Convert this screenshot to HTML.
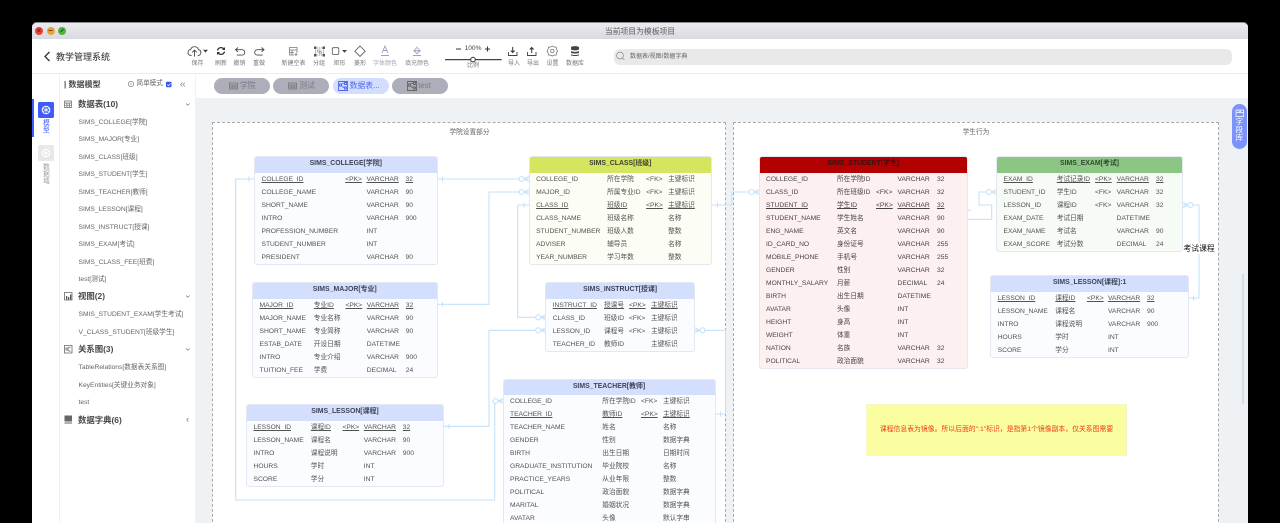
<!DOCTYPE html>
<html lang="zh">
<head>
<meta charset="utf-8">
<title>教学管理系统</title>
<style>
*{box-sizing:border-box;margin:0;padding:0}
html,body{width:1280px;height:523px;overflow:hidden;background:#000}
body{font-family:"Liberation Sans","Noto Sans CJK SC",sans-serif;position:relative}
.win{position:absolute;left:32px;top:22px;width:1216px;height:501px;background:#fff;border-radius:5px 5px 0 0;overflow:hidden}
.page{position:absolute;left:0;top:0;width:1280px;height:523px;filter:blur(.3px)}
.bar{position:absolute;left:32px;top:22px;width:1216px;height:17px;background:linear-gradient(#ebecf0,#d9dadf);border-radius:5px 5px 0 0;border-top:1px solid #8d8d90}
.dot{position:absolute;width:8px;height:8px;border-radius:50%;top:26.5px}
.tt{position:absolute;white-space:nowrap}
.lb{position:absolute;top:61px;font-size:6px;line-height:7px;color:#777;white-space:nowrap;transform:translateX(-50%)}
.tab{position:absolute;top:78px;height:16px;width:56px;border-radius:8px;background:#aeaeba;color:#7b7b85;font-size:7.8px;line-height:16px}
.tab span{position:absolute;left:26px;top:0;white-space:nowrap}
.tab svg{position:absolute;left:15px;top:4px}
.it{position:absolute;left:78.5px;font-size:6.7px;line-height:10px;margin-top:1px;color:#666;white-space:nowrap}
.gr{position:absolute;left:78px;font-size:8.4px;font-weight:700;line-height:12px;color:#484848;white-space:nowrap}
.dash{position:absolute;top:122px;height:420px;background:#fff;border:1px dashed #a9a9a9}
.cap{position:absolute;top:128px;font-size:6.7px;line-height:9px;color:#666;white-space:nowrap;transform:translateX(-50%)}
.e{position:absolute;background:#fbfcff;border:1px solid #e3e8f1;border-radius:3px;font-size:6.7px;color:#525252;overflow:hidden}
.e h3{height:16.5px;margin:-1px -1px 0;background:#d3dffc;font-size:6.9px;line-height:16px;text-align:center;font-weight:700;color:#3f4358}
.r{display:grid;grid-template-columns:var(--g);height:13px;line-height:13px;white-space:nowrap;padding-left:6.5px}
.r i{font-style:normal;display:block}
.u i{text-decoration:underline}
svg.o{position:absolute;left:0;top:0}
</style>
</head>
<body>
<div class="win"></div>
<div class="page">
<div class="bar"></div>
<div class="dot" style="left:35px;background:#e0443e"></div>
<div class="dot" style="left:46.5px;background:#e5a23c"></div>
<div class="dot" style="left:58px;background:#4fb340"></div>
<svg class="o" width="1280" height="523" fill="none"><path d="M37.5 29l3 3M40.5 29l-3 3" stroke="#7d1a16" stroke-width=".8"/><path d="M48.5 30.5h4" stroke="#7a4a08" stroke-width="1"/><path d="M60.5 32l3-3" stroke="#145c12" stroke-width="1"/></svg>
<div class="tt" style="left:640px;top:26.5px;transform:translateX(-50%);font-size:7.8px;line-height:10px;color:#5c5c5c">当前项目为模板项目</div>

<!-- toolbar -->
<div style="position:absolute;left:32px;top:73px;width:1216px;height:1px;background:#ececee"></div>
<div style="position:absolute;left:196px;top:98px;width:1052px;height:425px;background:#eef2f4"></div>
<div class="tt" style="left:56px;top:51px;font-size:9px;line-height:12px;color:#4a4a4a;font-weight:500">教学管理系统</div>
<svg class="o" width="1280" height="523" fill="none">
<path d="M49.5 52l-4.5 4.5 4.5 4.500" stroke="#333" stroke-width="1.3"/>
<path d="M191.5 55.5c-2.2 0-3.5-1.3-3.5-3 0-1.6 1.2-2.8 2.6-2.9.6-1.8 2.1-2.9 3.9-2.9 2 0 3.500 1.200 4 3 1.300.2 2.400 1.300 2.400 2.800 0 1.700-1.300 3-3.100 3" stroke="#444" stroke-width=".9"/>
<path d="M194.5 56.5v-6M192.3 52.3l2.200-2.200 2.200 2.200" stroke="#444" stroke-width=".9"/>
<path d="M203 49.8h5l-2.500 2.800z" fill="#444"/>
<path d="M217.5 50.5c.4-1.900 1.900-2.900 3.500-2.900 1.200 0 2.200.5 2.900 1.400M224.5 51.5c-.4 1.900-1.900 2.900-3.500 2.900-1.200 0-2.200-.5-2.900-1.400" stroke="#333" stroke-width="1.3"/>
<path d="M225 47v3h-3zM217 55v-3h3z" fill="#333"/>
<path d="M238 47.5l-2.500 2.200 2.500 2.200M235.8 49.7h6c1.900 0 3 1.200 3 2.700s-1.100 2.700-3 2.700h-5" stroke="#444" stroke-width=".9"/>
<path d="M261.5 47.5l2.500 2.200-2.500 2.200M263.7 49.7h-6c-1.900 0-3 1.200-3 2.700s1.100 2.700 3 2.700h5" stroke="#444" stroke-width=".9"/>
<path d="M297 53v-5.500h-7.500v7.500h4.500M289.500 50h7.500M289.500 52.500h4.500M292 50v5" stroke="#777" stroke-width=".8"/>
<path d="M296 53v3M294.500 54.500h3" stroke="#777" stroke-width=".8"/>
<path d="M315.500 48h8M315.500 55h8M315.500 48v7M323.500 48v7" stroke="#666" stroke-width=".8" stroke-dasharray="1 .8"/>
<path d="M314 46.500h2.500v2.500h-2.500zM322.500 46.500h2.500v2.500h-2.500zM314 54h2.500v2.500h-2.500zM322.500 54h2.500v2.500h-2.500z" fill="#555"/>
<path d="M317.500 50h2.500v2h-2.500zM319.500 51.500h2v2h-2z" stroke="#777" stroke-width=".6"/>
<rect x="332.3" y="47.7" width="6.5" height="6.8" rx="1.2" stroke="#555" stroke-width=".8"/>
<path d="M342 50h5l-2.500 2.800z" fill="#444"/>
<path d="M360 46l5.200 5.200-5.200 5.200-5.200-5.200z" stroke="#555" stroke-width=".8"/>
<path d="M382 53l3-7 3 7M383.200 50.500h3.600" stroke="#9aa3bb" stroke-width=".9"/><path d="M381 55.500h8" stroke="#9aa3bb" stroke-width="1"/>
<path d="M417 46.500v1.500M417 47.500l3.300 3.200-3.300 3-3.300-3z" stroke="#9aa3bb" stroke-width=".8"/><path d="M414.200 50.800h6" stroke="#9aa3bb" stroke-width="1.2"/><path d="M413 55.500h8" stroke="#9aa3bb" stroke-width="1"/>
<path d="M456 49h5M485 49h5M487.500 46.500v5" stroke="#333" stroke-width="1.1"/>
<path d="M445 59.600h56.700" stroke="#444" stroke-width="1.2"/>
<circle cx="473" cy="59.6" r="2.3" fill="#fff" stroke="#333" stroke-width="1"/>
<path d="M508.500 52v3.500h8.500V52" stroke="#444" stroke-width=".9"/><path d="M512.700 47v5.500M510.800 50.500l1.900 2 1.900-2" stroke="#333" stroke-width="1"/>
<path d="M527.500 52v3.500h8.500V52" stroke="#444" stroke-width=".9"/><path d="M531.700 53v-5.500M529.800 49.500l1.900-2 1.900 2" stroke="#333" stroke-width="1"/>
<circle cx="552.3" cy="51" r="1.7" stroke="#666" stroke-width=".7"/>
<path d="M550.500 47l1.800-1 1.800 1 2 .1.400 2 1 2-1 1.900-.4 2-2 .1-1.800 1-1.800-1-2-.1-.4-2-1-1.900 1-2 .4-2z" stroke="#666" stroke-width=".7"/>
<path d="M571 47.500c0-1.800 8-1.800 8 0v1.500c0 1.800-8 1.800-8 0zM571 50.500c0 1.800 8 1.800 8 0v1.700c0 1.800-8 1.800-8 0zM571 53.700c0 1.800 8 1.800 8 0v1c0 1.800-8 1.800-8 0z" fill="#444"/>
</svg>
<div class="lb" style="left:197.5px">保存</div>
<div class="lb" style="left:221px">刷新</div>
<div class="lb" style="left:239.5px">撤销</div>
<div class="lb" style="left:259px">重做</div>
<div class="lb" style="left:293.5px">新建空表</div>
<div class="lb" style="left:319px">分组</div>
<div class="lb" style="left:339.5px">矩形</div>
<div class="lb" style="left:360px">菱形</div>
<div class="lb" style="left:385px;color:#a3a7b5">字体颜色</div>
<div class="lb" style="left:417px;color:#888">填充颜色</div>
<div class="tt" style="left:473px;top:45px;transform:translateX(-50%);font-size:6.6px;line-height:8px;color:#444">100%</div>
<div class="lb" style="left:473px;top:63px">比例</div>
<div class="lb" style="left:514px">导入</div>
<div class="lb" style="left:533px">导出</div>
<div class="lb" style="left:552.5px">设置</div>
<div class="lb" style="left:575px">数据库</div>
<div style="position:absolute;left:614px;top:48.5px;width:618px;height:16.5px;border-radius:6px;background:#e9e9e9"></div>
<svg class="o" width="1280" height="523" fill="none"><circle cx="620" cy="55.5" r="3.4" stroke="#888" stroke-width=".7"/><path d="M622.500 58l1.800 1.800" stroke="#888" stroke-width=".7"/></svg>
<div class="tt" style="left:630px;top:52.5px;font-size:6px;line-height:8px;color:#666">数据表/视图/数据字典</div>

<!-- tabs -->
<div class="tab" style="left:214px"><svg width="9" height="8" fill="none" stroke="#777" stroke-width=".8"><path d="M.5 1h8v6h-8zM.5 3h8M.5 5h8M3.200 3v4M5.900 3v4"/></svg><span>学院</span></div>
<div class="tab" style="left:273.3px"><svg width="9" height="8" fill="none" stroke="#777" stroke-width=".8"><path d="M.5 1h8v6h-8zM.5 3h8M.5 5h8M3.200 3v4M5.900 3v4"/></svg><span>测试</span></div>
<div class="tab" style="left:332.7px;background:#d3deff;color:#4f68ea"><svg style="left:5px;top:3px" width="10" height="10" fill="none" stroke="#4f68ea" stroke-width=".9"><path d="M.5.500h9v9h-9zM3.500 3l3-1M3.500 5l3 2M1.500 3h2v2h-2zM6.500 1.500h2v2h-2zM6.500 6h2v2h-2z"/></svg><span style="left:17px">数据表...</span></div>
<div class="tab" style="left:391.7px"><svg style="left:15px;top:3px" width="10" height="10" fill="none" stroke="#666" stroke-width=".9"><path d="M.5.500h9v9h-9zM3.500 3l3-1M3.500 5l3 2M1.500 3h2v2h-2zM6.500 1.500h2v2h-2zM6.500 6h2v2h-2z"/></svg><span style="left:26.5px;font-size:7.8px">test</span></div>

<!-- sidebar -->
<div style="position:absolute;left:59px;top:74px;width:1px;height:449px;background:#eff0f2"></div>
<div style="position:absolute;left:195px;top:74px;width:1px;height:449px;background:#f1f2f4"></div>
<div style="position:absolute;left:32px;top:99px;width:1.5px;height:38px;background:#3f5cf8"></div>
<div style="position:absolute;left:38px;top:102px;width:16px;height:16px;background:#3f5cf8;border-radius:1.5px"></div>
<div style="position:absolute;left:38px;top:145px;width:16px;height:16px;background:#e8e8e8;border-radius:1.5px"></div>
<svg class="o" width="1280" height="523" fill="none"><circle cx="46" cy="110" r="3.8" stroke="#fff" stroke-width="1"/><path d="M46 106.500v7M42.800 108.200l6.400 3.600M49.200 108.200l-6.400 3.600" stroke="#fff" stroke-width=".7"/><circle cx="46" cy="153" r="3.8" stroke="#fff" stroke-width="1"/><path d="M46 149.500v7M42.800 151.200l6.400 3.600M49.200 151.200l-6.400 3.600" stroke="#fff" stroke-width=".7"/></svg>
<div class="tt" style="left:43px;top:120px;width:7px;font-size:6.8px;line-height:7px;color:#3f5cf8;white-space:normal">模<br>型</div>
<div class="tt" style="left:43px;top:163.5px;width:7px;font-size:6.8px;line-height:7px;color:#9a9a9a;white-space:normal">数<br>据<br>域</div>

<div class="tt" style="left:64px;top:79px;font-size:8px;line-height:12px;font-weight:700;color:#4a4a4a">| 数据模型</div>
<svg class="o" width="1280" height="523" fill="none"><circle cx="131" cy="84" r="2.7" stroke="#666" stroke-width=".6"/><path d="M131 82.800v1.800M131 85.100v.5" stroke="#666" stroke-width=".6"/><rect x="166" y="81.8" width="5.5" height="5.5" rx="1" fill="#3554e8"/><path d="M167.200 84.500l1.300 1.300 2-2.300" stroke="#fff" stroke-width=".7"/><path d="M182.500 82.500l-2 2 2 2M185 82.500l-2 2 2 2" stroke="#888" stroke-width=".7"/>
<path d="M186 103.500l1.800 1.800 1.800-1.800M186 295.500l1.800 1.800 1.800-1.800M186 348.500l1.800 1.800 1.800-1.800" stroke="#777" stroke-width=".7"/><path d="M188.500 418l-1.800 1.800 1.800 1.800" stroke="#777" stroke-width=".7"/>
<path d="M64.500 101h7v6.500h-7zM64.500 103h7M64.500 105.200h7M67 103v4.500M69.400 103v4.500" stroke="#666" stroke-width=".7"/>
<path d="M64.500 292.500h7.500v7.500h-7.500z" stroke="#666" stroke-width=".8"/><path d="M66 296h1.300v3.500H66zM68 297h1.300v2.500H68zM70 294.500h1.300v5H70z" fill="#555"/>
<path d="M64.500 345.500h7.500v7.500h-7.500zM68 348l2.500-1M68 350.500l2.500 1M66 348h2v2h-2z" stroke="#666" stroke-width=".8"/>
<path d="M64.500 415.500h7.500v6h-7.500z" fill="#666"/><path d="M64.500 423h7.500" stroke="#666" stroke-width="1"/></svg>
<div class="tt" style="left:136.5px;top:80px;font-size:6.6px;line-height:8px;color:#666">简单模式</div>
<div class="gr" style="top:98.3px">数据表(10)</div>
<div class="it" style="top:116.7px">SIMS_COLLEGE[学院]</div>
<div class="it" style="top:134.2px">SIMS_MAJOR[专业]</div>
<div class="it" style="top:151.7px">SIMS_CLASS[班级]</div>
<div class="it" style="top:169.2px">SIMS_STUDENT[学生]</div>
<div class="it" style="top:186.7px">SIMS_TEACHER[教师]</div>
<div class="it" style="top:204.2px">SIMS_LESSON[课程]</div>
<div class="it" style="top:221.7px">SIMS_INSTRUCT[授课]</div>
<div class="it" style="top:239.2px">SIMS_EXAM[考试]</div>
<div class="it" style="top:256.7px">SIMS_CLASS_FEE[班费]</div>
<div class="it" style="top:274.2px">test[测试]</div>
<div class="gr" style="top:290.2px">视图(2)</div>
<div class="it" style="top:309px">SMIS_STUDENT_EXAM[学生考试]</div>
<div class="it" style="top:326.5px">V_CLASS_STUDENT[班级学生]</div>
<div class="gr" style="top:343px">关系图(3)</div>
<div class="it" style="top:362px">TableRelations[数据表关系图]</div>
<div class="it" style="top:379.5px">KeyEntities[关键业务对象]</div>
<div class="it" style="top:397px">test</div>
<div class="gr" style="top:413.5px">数据字典(6)</div>

<!-- canvas -->
<div class="dash" style="left:212px;width:513.5px"></div>
<div class="dash" style="left:733px;width:485.5px"></div>
<div class="cap" style="left:469.5px">学院设置部分</div>
<div class="cap" style="left:976px">学生行为</div>

<svg class="o" width="1280" height="523" fill="none">
<defs>
<g id="cr"><circle cx="-7.5" cy="0" r="2.5" fill="#fff"/><path d="M-5 0h5M-4.800 0L0-2.500M-4.800 0L0 2.500"/></g>
<g id="cl"><circle cx="7.5" cy="0" r="2.5" fill="#fff"/><path d="M5 0H0M4.800 0L0-2.500M4.800 0L0 2.500"/></g>
</defs>
<g stroke="#c4e2fb" stroke-width="1.1">
<path d="M437 179H523"/>
<path d="M438 304.300H489V192H524"/>
<path d="M529 205H517.700V317.300H540"/>
<path d="M444 426.300H489V330.300H540"/>
<path d="M254 179H235.700V500H494.700V401H497"/>
<path d="M702 330.300H725.500V414H715.500"/>
<path d="M712 205H731.700V192H754"/>
<path d="M968 219.300H991.700V205H979V192H992"/>
<path d="M968 210.200H971"/>
<path d="M1190 205H1199V298H1189"/>
<path d="M442.500 176.500v5M442.500 301.800v5M524 202.500v5M249 176.500v5M449 423.800v5M720.500 411.500v5M717.500 202.500v5M1193.500 295.500v5"/>
<use href="#cr" x="529" y="179"/>
<use href="#cr" x="529" y="192"/>
<use href="#cr" x="545.7" y="317.3"/>
<use href="#cr" x="545.7" y="330.3"/>
<use href="#cr" x="503" y="401"/>
<use href="#cl" x="695" y="330.3"/>
<use href="#cr" x="759" y="192"/>
<use href="#cr" x="996.5" y="192"/>
<use href="#cl" x="1183" y="205"/>
</g>
</svg>

<!-- SIMS_COLLEGE -->
<div class="e" style="left:254px;top:156px;width:183.500px;height:109px;--g:53px 30.7px 21.3px 39px auto"><h3>SIMS_COLLEGE[学院]</h3>
<div class="r u"><i>COLLEGE_ID</i><i></i><i>&lt;PK&gt;</i><i>VARCHAR</i><i>32</i></div>
<div class="r"><i>COLLEGE_NAME</i><i></i><i></i><i>VARCHAR</i><i>90</i></div>
<div class="r"><i>SHORT_NAME</i><i></i><i></i><i>VARCHAR</i><i>90</i></div>
<div class="r"><i>INTRO</i><i></i><i></i><i>VARCHAR</i><i>900</i></div>
<div class="r"><i>PROFESSION_NUMBER</i><i></i><i></i><i>INT</i><i></i></div>
<div class="r"><i>STUDENT_NUMBER</i><i></i><i></i><i>INT</i><i></i></div>
<div class="r"><i>PRESIDENT</i><i></i><i></i><i>VARCHAR</i><i>90</i></div>
</div>

<!-- SIMS_MAJOR -->
<div class="e" style="left:252px;top:282px;width:185.500px;height:96px;--g:54.3px 31.7px 21.3px 39px auto"><h3>SIMS_MAJOR[专业]</h3>
<div class="r u"><i>MAJOR_ID</i><i>专业ID</i><i>&lt;PK&gt;</i><i>VARCHAR</i><i>32</i></div>
<div class="r"><i>MAJOR_NAME</i><i>专业名称</i><i></i><i>VARCHAR</i><i>90</i></div>
<div class="r"><i>SHORT_NAME</i><i>专业简称</i><i></i><i>VARCHAR</i><i>90</i></div>
<div class="r"><i>ESTAB_DATE</i><i>开设日期</i><i></i><i>DATETIME</i><i></i></div>
<div class="r"><i>INTRO</i><i>专业介绍</i><i></i><i>VARCHAR</i><i>900</i></div>
<div class="r"><i>TUITION_FEE</i><i>学费</i><i></i><i>DECIMAL</i><i>24</i></div>
</div>

<!-- SIMS_LESSON -->
<div class="e" style="left:246px;top:404px;width:198px;height:83px;--g:57.3px 31.7px 21.3px 39px auto"><h3>SIMS_LESSON[课程]</h3>
<div class="r u"><i>LESSON_ID</i><i>课程ID</i><i>&lt;PK&gt;</i><i>VARCHAR</i><i>32</i></div>
<div class="r"><i>LESSON_NAME</i><i>课程名</i><i></i><i>VARCHAR</i><i>90</i></div>
<div class="r"><i>INTRO</i><i>课程说明</i><i></i><i>VARCHAR</i><i>900</i></div>
<div class="r"><i>HOURS</i><i>学时</i><i></i><i>INT</i><i></i></div>
<div class="r"><i>SCORE</i><i>学分</i><i></i><i>INT</i><i></i></div>
</div>

<!-- SIMS_CLASS -->
<div class="e" style="left:528.6px;top:156px;width:183.4px;height:109px;background:#fcfdf5;--g:71px 39px 22px auto"><h3 style="background:#d6e560;color:#3d4030">SIMS_CLASS[班级]</h3>
<div class="r"><i>COLLEGE_ID</i><i>所在学院</i><i>&lt;FK&gt;</i><i>主键标识</i></div>
<div class="r"><i>MAJOR_ID</i><i>所属专业ID</i><i>&lt;FK&gt;</i><i>主键标识</i></div>
<div class="r u"><i>CLASS_ID</i><i>班级ID</i><i>&lt;PK&gt;</i><i>主键标识</i></div>
<div class="r"><i>CLASS_NAME</i><i>班级名称</i><i></i><i>名称</i></div>
<div class="r"><i>STUDENT_NUMBER</i><i>班级人数</i><i></i><i>整数</i></div>
<div class="r"><i>ADVISER</i><i>辅导员</i><i></i><i>名称</i></div>
<div class="r"><i>YEAR_NUMBER</i><i>学习年数</i><i></i><i>整数</i></div>
</div>

<!-- SIMS_INSTRUCT -->
<div class="e" style="left:545.2px;top:282px;width:149.8px;height:69.5px;--g:51.3px 25px 22px auto"><h3>SIMS_INSTRUCT[授课]</h3>
<div class="r u"><i>INSTRUCT_ID</i><i>授课号</i><i>&lt;PK&gt;</i><i>主键标识</i></div>
<div class="r"><i>CLASS_ID</i><i>班级ID</i><i>&lt;FK&gt;</i><i>主键标识</i></div>
<div class="r"><i>LESSON_ID</i><i>课程号</i><i>&lt;FK&gt;</i><i>主键标识</i></div>
<div class="r"><i>TEACHER_ID</i><i>教师ID</i><i></i><i>主键标识</i></div>
</div>

<!-- SIMS_TEACHER -->
<div class="e" style="left:502.5px;top:378.5px;width:213px;height:170px;--g:92.3px 38.7px 22px auto"><h3>SIMS_TEACHER[教师]</h3>
<div class="r"><i>COLLEGE_ID</i><i>所在学院ID</i><i>&lt;FK&gt;</i><i>主键标识</i></div>
<div class="r u"><i>TEACHER_ID</i><i>教师ID</i><i>&lt;PK&gt;</i><i>主键标识</i></div>
<div class="r"><i>TEACHER_NAME</i><i>姓名</i><i></i><i>名称</i></div>
<div class="r"><i>GENDER</i><i>性别</i><i></i><i>数据字典</i></div>
<div class="r"><i>BIRTH</i><i>出生日期</i><i></i><i>日期时间</i></div>
<div class="r"><i>GRADUATE_INSTITUTION</i><i>毕业院校</i><i></i><i>名称</i></div>
<div class="r"><i>PRACTICE_YEARS</i><i>从业年限</i><i></i><i>整数</i></div>
<div class="r"><i>POLITICAL</i><i>政治面貌</i><i></i><i>数据字典</i></div>
<div class="r"><i>MARITAL</i><i>婚姻状况</i><i></i><i>数据字典</i></div>
<div class="r"><i>AVATAR</i><i>头像</i><i></i><i>默认字串</i></div>
</div>

<!-- SIMS_STUDENT -->
<div class="e" style="left:758.5px;top:156px;width:209.5px;height:212.5px;background:#fdf0f0;color:#454545;--g:71px 39px 21.5px 39.5px auto"><h3 style="background:#b30000;color:#3a1010">SIMS_STUDENT[学生]</h3>
<div class="r"><i>COLLEGE_ID</i><i>所在学院ID</i><i></i><i>VARCHAR</i><i>32</i></div>
<div class="r"><i>CLASS_ID</i><i>所在班级ID</i><i>&lt;FK&gt;</i><i>VARCHAR</i><i>32</i></div>
<div class="r u"><i>STUDENT_ID</i><i>学生ID</i><i>&lt;PK&gt;</i><i>VARCHAR</i><i>32</i></div>
<div class="r"><i>STUDENT_NAME</i><i>学生姓名</i><i></i><i>VARCHAR</i><i>90</i></div>
<div class="r"><i>ENG_NAME</i><i>英文名</i><i></i><i>VARCHAR</i><i>90</i></div>
<div class="r"><i>ID_CARD_NO</i><i>身份证号</i><i></i><i>VARCHAR</i><i>255</i></div>
<div class="r"><i>MOBILE_PHONE</i><i>手机号</i><i></i><i>VARCHAR</i><i>255</i></div>
<div class="r"><i>GENDER</i><i>性别</i><i></i><i>VARCHAR</i><i>32</i></div>
<div class="r"><i>MONTHLY_SALARY</i><i>月薪</i><i></i><i>DECIMAL</i><i>24</i></div>
<div class="r"><i>BIRTH</i><i>出生日期</i><i></i><i>DATETIME</i><i></i></div>
<div class="r"><i>AVATAR</i><i>头像</i><i></i><i>INT</i><i></i></div>
<div class="r"><i>HEIGHT</i><i>身高</i><i></i><i>INT</i><i></i></div>
<div class="r"><i>WEIGHT</i><i>体重</i><i></i><i>INT</i><i></i></div>
<div class="r"><i>NATION</i><i>名族</i><i></i><i>VARCHAR</i><i>32</i></div>
<div class="r"><i>POLITICAL</i><i>政治面貌</i><i></i><i>VARCHAR</i><i>32</i></div>
</div>

<!-- SIMS_EXAM -->
<div class="e" style="left:996px;top:156px;width:187px;height:96px;background:#f6fbf6;--g:53.2px 38.3px 21.7px 39.3px auto"><h3 style="background:#8cc684;color:#2f4a2c">SIMS_EXAM[考试]</h3>
<div class="r u"><i>EXAM_ID</i><i>考试记录ID</i><i>&lt;PK&gt;</i><i>VARCHAR</i><i>32</i></div>
<div class="r"><i>STUDENT_ID</i><i>学生ID</i><i>&lt;FK&gt;</i><i>VARCHAR</i><i>32</i></div>
<div class="r"><i>LESSON_ID</i><i>课程ID</i><i>&lt;FK&gt;</i><i>VARCHAR</i><i>32</i></div>
<div class="r"><i>EXAM_DATE</i><i>考试日期</i><i></i><i>DATETIME</i><i></i></div>
<div class="r"><i>EXAM_NAME</i><i>考试名</i><i></i><i>VARCHAR</i><i>90</i></div>
<div class="r"><i>EXAM_SCORE</i><i>考试分数</i><i></i><i>DECIMAL</i><i>24</i></div>
</div>

<!-- SIMS_LESSON:1 -->
<div class="e" style="left:990.2px;top:275px;width:198.8px;height:83px;--g:57.6px 31.7px 21px 39px auto"><h3>SIMS_LESSON[课程]:1</h3>
<div class="r u"><i>LESSON_ID</i><i>课程ID</i><i>&lt;PK&gt;</i><i>VARCHAR</i><i>32</i></div>
<div class="r"><i>LESSON_NAME</i><i>课程名</i><i></i><i>VARCHAR</i><i>90</i></div>
<div class="r"><i>INTRO</i><i>课程说明</i><i></i><i>VARCHAR</i><i>900</i></div>
<div class="r"><i>HOURS</i><i>学时</i><i></i><i>INT</i><i></i></div>
<div class="r"><i>SCORE</i><i>学分</i><i></i><i>INT</i><i></i></div>
</div>

<div class="tt" style="left:1183.5px;top:243px;font-size:7.8px;line-height:11px;color:#111;background:#fff">考试课程</div>

<!-- note -->
<div style="position:absolute;left:866px;top:404px;width:261px;height:52px;background:#fbfea0;border:1px solid #f5f5cc;color:#f03a17;font-size:6.85px;line-height:50px;text-align:center;white-space:nowrap">课程信息表为镜像。所以后面的":1"标识，是指第1个镜像副本，仅关系图需要</div>

<!-- field library -->
<div style="position:absolute;left:1232.3px;top:104px;width:14.5px;height:44.5px;background:#7b93fb;border-radius:8px"></div>
<svg class="o" width="1280" height="523" fill="none"><path d="M1236 110h7.500v6.500h-7.500zM1236 112.500h7.500M1238.500 110.500l1.200 2 1.300-2" stroke="#fff" stroke-width=".7"/></svg>
<div class="tt" style="left:1235.5px;top:117.5px;width:8px;font-size:7.5px;line-height:8.2px;color:#fff;white-space:normal">字<br>段<br>库</div>

<!-- scrollbar -->
<div style="position:absolute;left:1242px;top:274px;width:2px;height:130px;background:#d8dde8"></div>
</div>
</body>
</html>
